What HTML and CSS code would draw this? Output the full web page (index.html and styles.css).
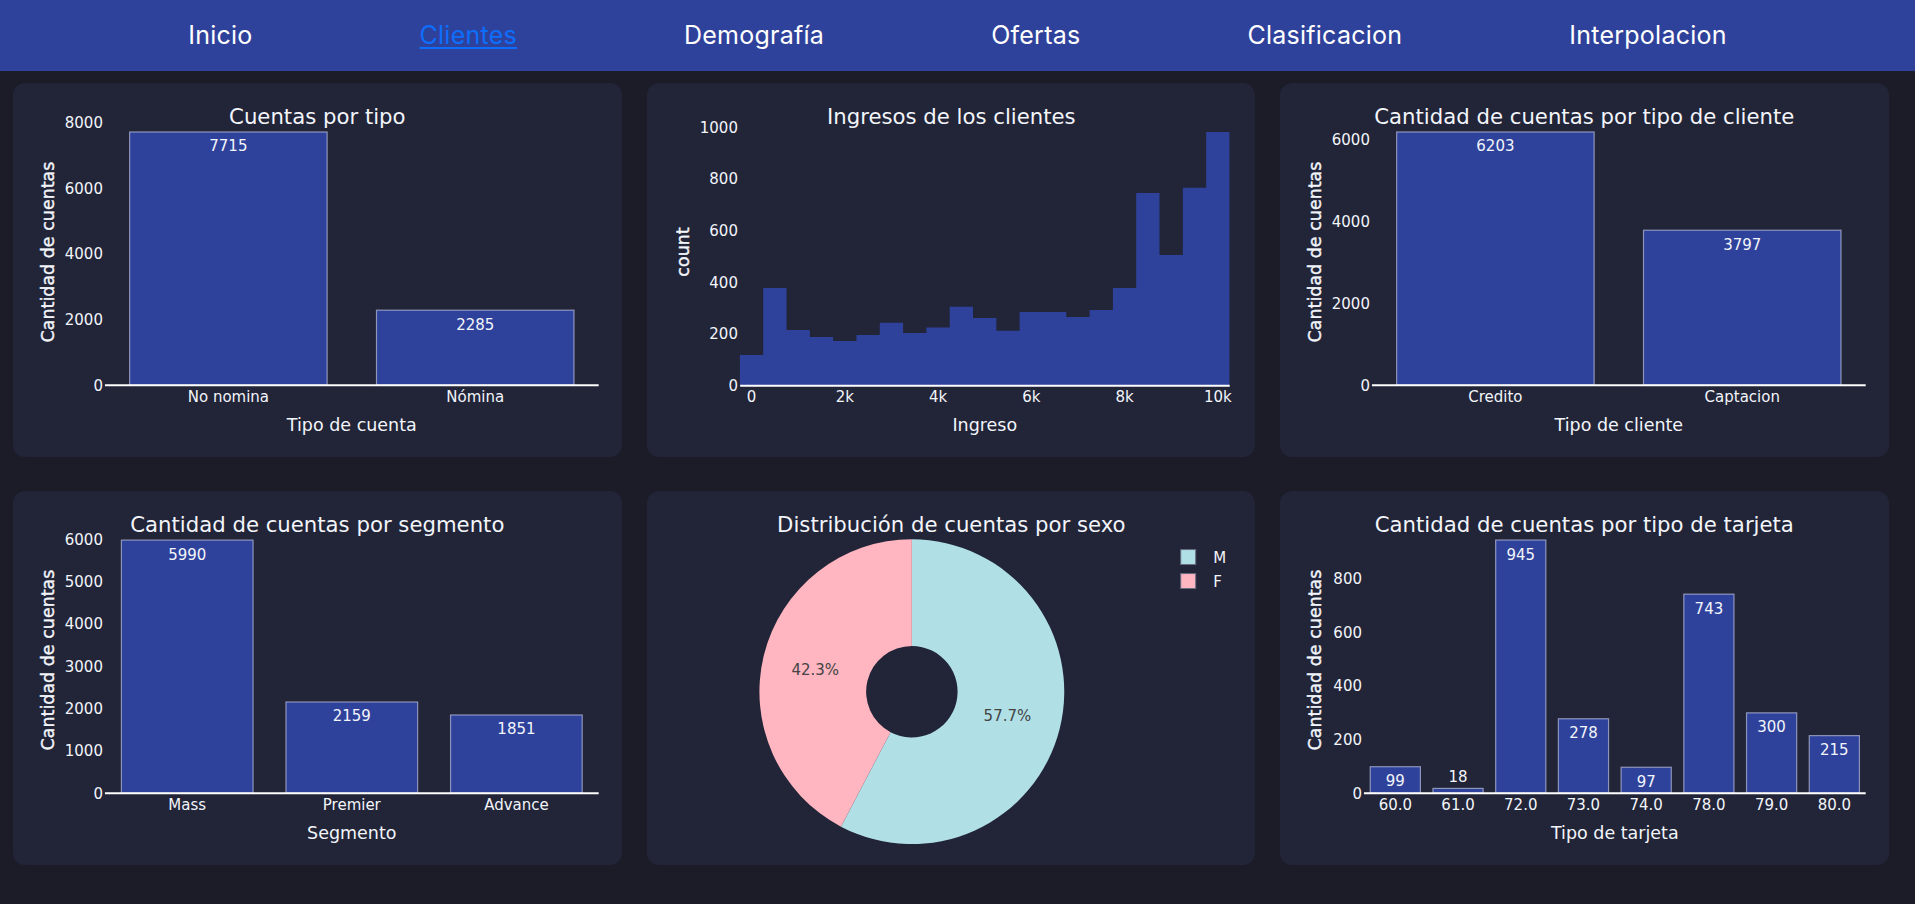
FILE: index.html
```html
<!DOCTYPE html>
<html lang="es">
<head>
<meta charset="utf-8">
<title>Clientes</title>
<link rel="stylesheet" href="styles.css">
</head>
<body>
<nav class="nav">
  <a class="nav-link" href="#">Inicio</a>
  <a class="nav-link active" href="#">Clientes</a>
  <a class="nav-link" href="#">Demografía</a>
  <a class="nav-link" href="#">Ofertas</a>
  <a class="nav-link" href="#">Clasificacion</a>
  <a class="nav-link" href="#">Interpolacion</a>
</nav>

<main class="grid">
  <!-- Chart 1 -->
  <section class="card">
    <svg class="chart" viewBox="0 0 609 374">
      <text class="ttl" x="304.5" y="40.5">Cuentas por tipo</text>
      <g class="ytick">
        <text x="90" y="307.6">0</text>
        <text x="90" y="241.9">2000</text>
        <text x="90" y="176.2">4000</text>
        <text x="90" y="110.5">6000</text>
        <text x="90" y="44.8">8000</text>
      </g>
      <rect class="bar" x="116.7" y="48.9" width="197.6" height="253.4"/>
      <rect class="bar" x="363.7" y="227.2" width="197.6" height="75.1"/>
      <g class="val">
        <text x="215.5" y="68.4">7715</text>
        <text x="462.5" y="246.7">2285</text>
      </g>
      <line class="axis" x1="92" y1="302.3" x2="586" y2="302.3"/>
      <g class="xtick">
        <text x="215.5" y="319.5">No nomina</text>
        <text x="462.5" y="319.5">Nómina</text>
      </g>
      <text class="axt" x="339" y="348.5">Tipo de cuenta</text>
      <text class="axt yt" transform="translate(40.8,169) rotate(-90)">Cantidad de cuentas</text>
    </svg>
  </section>

  <!-- Chart 2 -->
  <section class="card">
    <svg class="chart" viewBox="0 0 609 374">
      <text class="ttl" x="304.5" y="40.5">Ingresos de los clientes</text>
      <g class="ytick">
        <text x="91" y="308">0</text>
        <text x="91" y="256.3">200</text>
        <text x="91" y="204.6">400</text>
        <text x="91" y="152.9">600</text>
        <text x="91" y="101.2">800</text>
        <text x="91" y="49.5">1000</text>
      </g>
      <polygon class="hist" points="92.94,302.7 92.94,271.94 116.27,271.94 116.27,204.99 139.59,204.99 139.59,247.12 162.92,247.12 162.92,254.1 186.24,254.1 186.24,257.98 209.57,257.98 209.57,252.03 232.89,252.03 232.89,239.88 256.22,239.88 256.22,249.97 279.54,249.97 279.54,244.54 302.87,244.54 302.87,223.86 326.19,223.86 326.19,234.97 349.52,234.97 349.52,247.9 372.84,247.9 372.84,229.03 419.49,229.03 419.49,233.94 442.82,233.94 442.82,226.96 466.14,226.96 466.14,204.99 489.47,204.99 489.47,109.86 512.79,109.86 512.79,171.9 536.12,171.9 536.12,104.69 559.44,104.69 559.44,48.85 582.77,48.85 582.77,302.7"/>
      <line class="axis" x1="93.2" y1="302.7" x2="583" y2="302.7"/>
      <g class="xtick">
        <text x="104.6" y="319.5">0</text>
        <text x="197.9" y="319.5">2k</text>
        <text x="291.2" y="319.5">4k</text>
        <text x="384.5" y="319.5">6k</text>
        <text x="477.8" y="319.5">8k</text>
        <text x="571.1" y="319.5">10k</text>
      </g>
      <text class="axt" x="338" y="348.5">Ingreso</text>
      <text class="axt yt" transform="translate(41.8,169) rotate(-90)">count</text>
    </svg>
  </section>

  <!-- Chart 3 -->
  <section class="card">
    <svg class="chart" viewBox="0 0 609 374">
      <text class="ttl" x="304.5" y="40.5">Cantidad de cuentas por tipo de cliente</text>
      <g class="ytick">
        <text x="90" y="307.6">0</text>
        <text x="90" y="225.9">2000</text>
        <text x="90" y="144.2">4000</text>
        <text x="90" y="62.4">6000</text>
      </g>
      <rect class="bar" x="116.7" y="48.9" width="197.6" height="253.4"/>
      <rect class="bar" x="363.7" y="147.2" width="197.6" height="155.1"/>
      <g class="val">
        <text x="215.5" y="68.4">6203</text>
        <text x="462.5" y="166.7">3797</text>
      </g>
      <line class="axis" x1="92" y1="302.3" x2="586" y2="302.3"/>
      <g class="xtick">
        <text x="215.5" y="319.5">Credito</text>
        <text x="462.5" y="319.5">Captacion</text>
      </g>
      <text class="axt" x="339" y="348.5">Tipo de cliente</text>
      <text class="axt yt" transform="translate(40.8,169) rotate(-90)">Cantidad de cuentas</text>
    </svg>
  </section>

  <!-- Chart 4 -->
  <section class="card">
    <svg class="chart" viewBox="0 0 609 374">
      <text class="ttl" x="304.5" y="40.5">Cantidad de cuentas por segmento</text>
      <g class="ytick">
        <text x="90" y="307.6">0</text>
        <text x="90" y="265.3">1000</text>
        <text x="90" y="223">2000</text>
        <text x="90" y="180.7">3000</text>
        <text x="90" y="138.4">4000</text>
        <text x="90" y="96.2">5000</text>
        <text x="90" y="53.9">6000</text>
      </g>
      <rect class="bar" x="108.47" y="49" width="131.73" height="253.3"/>
      <rect class="bar" x="273.13" y="211" width="131.73" height="91.3"/>
      <rect class="bar" x="437.8" y="224" width="131.73" height="78.3"/>
      <g class="val">
        <text x="174.3" y="68.5">5990</text>
        <text x="339" y="230.5">2159</text>
        <text x="503.7" y="243.5">1851</text>
      </g>
      <line class="axis" x1="92" y1="302.3" x2="586" y2="302.3"/>
      <g class="xtick">
        <text x="174.3" y="319.5">Mass</text>
        <text x="339" y="319.5">Premier</text>
        <text x="503.7" y="319.5">Advance</text>
      </g>
      <text class="axt" x="339" y="348.5">Segmento</text>
      <text class="axt yt" transform="translate(40.8,169) rotate(-90)">Cantidad de cuentas</text>
    </svg>
  </section>

  <!-- Chart 5 -->
  <section class="card">
    <svg class="chart" viewBox="0 0 609 374">
      <text class="ttl" x="304.5" y="40.5">Distribución de cuentas por sexo</text>
      <path class="slice-m" d="M265 48.2 A152.5 152.5 0 1 1 194.07 335.71 L243.72 241.2 A45.75 45.75 0 1 0 265 154.95 Z"/>
      <path class="slice-f" d="M194.07 335.71 A152.5 152.5 0 0 1 265 48.2 L265 154.95 A45.75 45.75 0 0 0 243.72 241.2 Z"/>
      <g class="pct">
        <text x="168.3" y="183.8">42.3%</text>
        <text x="360.6" y="230.5">57.7%</text>
      </g>
      <rect class="slice-m legend-sw" x="534" y="58.5" width="15" height="15"/>
      <rect class="slice-f legend-sw" x="534" y="82.5" width="15" height="15"/>
      <g class="legend">
        <text x="566.5" y="72.2">M</text>
        <text x="566.5" y="95.7">F</text>
      </g>
    </svg>
  </section>

  <!-- Chart 6 -->
  <section class="card">
    <svg class="chart" viewBox="0 0 609 374">
      <text class="ttl" x="304.5" y="40.5">Cantidad de cuentas por tipo de tarjeta</text>
      <g class="ytick">
        <text x="82" y="307.6">0</text>
        <text x="82" y="254">200</text>
        <text x="82" y="200.4">400</text>
        <text x="82" y="146.7">600</text>
        <text x="82" y="93.1">800</text>
      </g>
      <rect class="bar" x="90.28" y="275.76" width="50.2" height="26.54"/>
      <rect class="bar" x="153.03" y="297.47" width="50.2" height="4.83"/>
      <rect class="bar" x="215.78" y="48.95" width="50.2" height="253.35"/>
      <rect class="bar" x="278.53" y="227.77" width="50.2" height="74.53"/>
      <rect class="bar" x="341.28" y="276.29" width="50.2" height="26.01"/>
      <rect class="bar" x="404.03" y="103.1" width="50.2" height="199.2"/>
      <rect class="bar" x="466.78" y="221.87" width="50.2" height="80.43"/>
      <rect class="bar" x="529.53" y="244.66" width="50.2" height="57.64"/>
      <g class="val">
        <text x="115.38" y="295.3">99</text>
        <text x="178.13" y="291">18</text>
        <text x="240.88" y="68.5">945</text>
        <text x="303.63" y="247.3">278</text>
        <text x="366.38" y="295.8">97</text>
        <text x="429.13" y="122.6">743</text>
        <text x="491.88" y="241.4">300</text>
        <text x="554.63" y="264.2">215</text>
      </g>
      <line class="axis" x1="84" y1="302.3" x2="586" y2="302.3"/>
      <g class="xtick">
        <text x="115.38" y="319.5">60.0</text>
        <text x="178.13" y="319.5">61.0</text>
        <text x="240.88" y="319.5">72.0</text>
        <text x="303.63" y="319.5">73.0</text>
        <text x="366.38" y="319.5">74.0</text>
        <text x="429.13" y="319.5">78.0</text>
        <text x="491.88" y="319.5">79.0</text>
        <text x="554.63" y="319.5">80.0</text>
      </g>
      <text class="axt" x="335" y="348.5">Tipo de tarjeta</text>
      <text class="axt yt" transform="translate(41,169) rotate(-90)">Cantidad de cuentas</text>
    </svg>
  </section>
</main>
</body>
</html>
```

FILE: styles.css
```css
html, body {
  margin: 0;
  padding: 0;
  background: #1b1c28;
  min-height: 100%;
}

body {
  font-family: "Inter", "Noto Sans", sans-serif;
}

.nav {
  height: 71px;
  background: #2f429b;
  display: flex;
  justify-content: center;
  align-items: center;
  gap: 167px;
}

.nav-link {
  color: #ffffff;
  font-size: 25px;
  font-weight: 400;
  letter-spacing: 0.25px;
  text-decoration: none;
  line-height: 1;
}

.nav-link.active {
  color: #0d6efd;
  text-decoration: underline;
  text-decoration-thickness: 2px;
  text-underline-offset: 3px;
}

.grid {
  display: grid;
  grid-template-columns: repeat(3, 1fr);
  grid-auto-rows: 374px;
  column-gap: 25px;
  row-gap: 34px;
  padding: 12px 26px 0 13px;
}

.card {
  background: #222438;
  border-radius: 12px;
  overflow: hidden;
}

.chart {
  display: block;
  width: 100%;
  height: 374px;
}

.chart text {
  font-family: "DejaVu Sans", Verdana, sans-serif;
  fill: #f2f5fa;
}

.chart .ttl {
  font-size: 21.25px;
  text-anchor: middle;
}

.chart .axt {
  font-size: 17.5px;
  text-anchor: middle;
}

.chart .yt {
  stroke: #f2f5fa;
  stroke-width: 0.4px;
}

.ytick text {
  font-size: 15px;
  text-anchor: end;
}

.xtick text,
.val text,
.pct text {
  font-size: 15px;
  text-anchor: middle;
}

.chart .pct text {
  fill: #444444;
}

.legend text {
  font-size: 15px;
}

.bar {
  fill: #2f429b;
  stroke: rgba(210, 215, 240, 0.6);
  stroke-width: 1.2;
}

.hist {
  fill: #2f429b;
}

.axis {
  stroke: #ffffff;
  stroke-width: 2;
}

.slice-m {
  fill: #b0e0e6;
}

.slice-f {
  fill: #ffb6c1;
}

.legend-sw {
  stroke: #666a80;
  stroke-width: 1;
}
```
